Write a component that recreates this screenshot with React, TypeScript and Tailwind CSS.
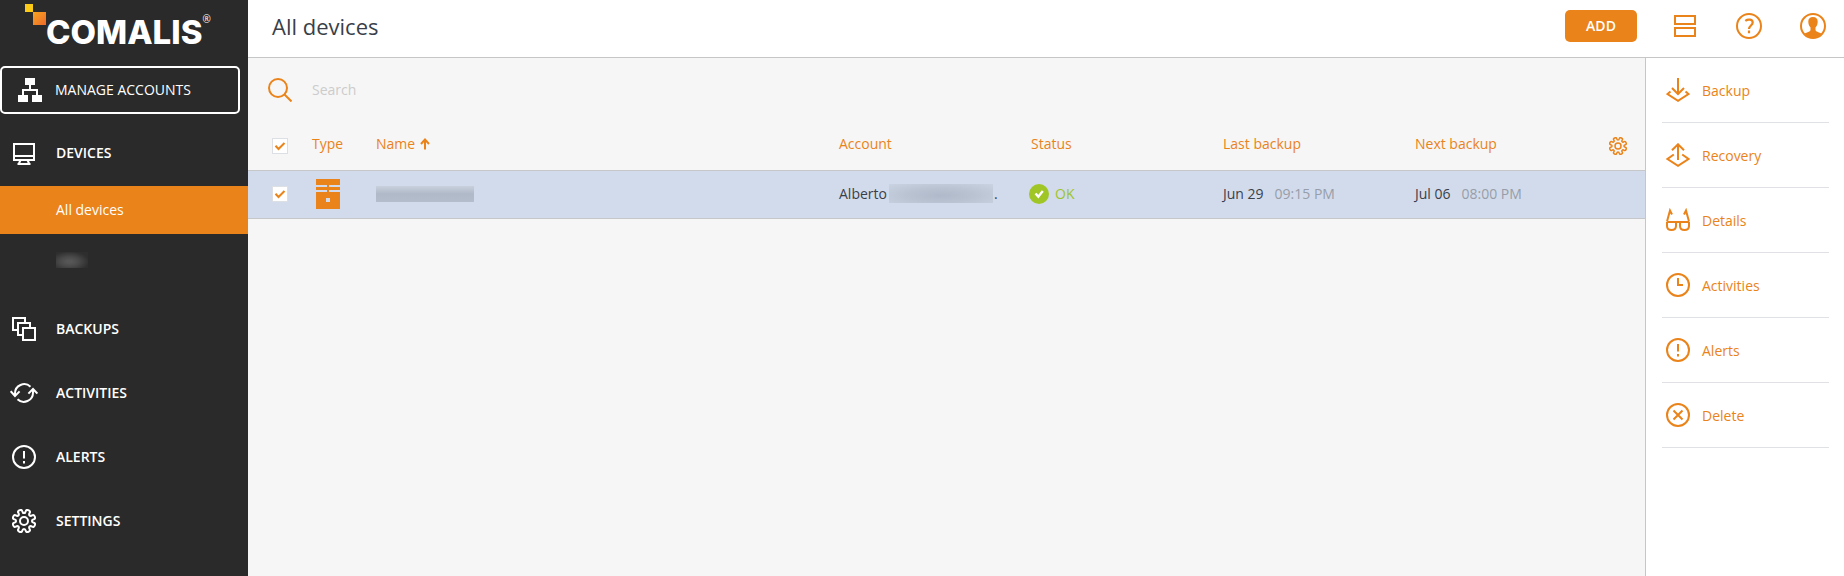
import React, { useState } from "react";

// Eight rounded teeth: each corner is the control point of a curve between edge midpoints.
const GEAR_PATH = (() => {
  const corners: [number, number][] = [];
  for (let i = 0; i < 8; i++) {
    const mid = 22.5 + i * 45;
    for (const [r, deg] of [
      [8, mid - 13],
      [11.9, mid - 12],
      [11.9, mid + 12],
      [8, mid + 13],
    ]) {
      const a = (deg * Math.PI) / 180;
      corners.push([12 + r * Math.cos(a), 12 + r * Math.sin(a)]);
    }
  }
  const between = (a: [number, number], b: [number, number]) =>
    `${((a[0] + b[0]) / 2).toFixed(2)} ${((a[1] + b[1]) / 2).toFixed(2)}`;
  const last = corners[corners.length - 1];
  let d = `M${between(last, corners[0])}`;
  corners.forEach((c, i) => {
    const next = corners[(i + 1) % corners.length];
    d += `Q${c[0].toFixed(2)} ${c[1].toFixed(2)} ${between(c, next)}`;
  });
  return `${d}Z`;
})();

type IconProps = { className?: string; children: React.ReactNode };

function Icon({ className = "size-6", children }: IconProps) {
  return (
    <svg
      viewBox="0 0 24 24"
      fill="none"
      stroke="currentColor"
      strokeWidth="2"
      aria-hidden="true"
      className={`block shrink-0 ${className}`}
    >
      {children}
    </svg>
  );
}

const GearIcon = ({ className }: { className?: string }) => (
  <Icon className={className}>
    <path d={GEAR_PATH} strokeLinejoin="round" />
    <circle cx="12" cy="12" r="4" />
  </Icon>
);

const AlertIcon = () => (
  <Icon>
    <circle cx="12" cy="12" r="11" />
    <path d="M12 6v7.5M12 16v2.4" />
  </Icon>
);

const OrgIcon = () => (
  <Icon>
    <path d="M7 0h10v7H7zM0 17h10v7H0zM14 17h10v7H14z" fill="currentColor" stroke="none" />
    <path d="M12 7v5M5 17v-5h14v5" />
  </Icon>
);

const MonitorIcon = () => (
  <Icon>
    <path d="M2 3h20v16H2zM2 15h20M8.5 19L7 22.5M15.500 19l1.500 3.500M5.500 23h13" />
  </Icon>
);

const StackIcon = () => (
  <Icon>
    <path d="M5 13H1V1h12v4" />
    <path d="M10 18H6V6h12v4" />
    <path d="M11 11h12v12H11z" />
  </Icon>
);

const SyncIcon = () => (
  <svg viewBox="0 0 28 24" fill="none" stroke="currentColor" strokeWidth="2" aria-hidden="true" className="-mx-0.5 block h-6 w-7 shrink-0">
    <path d="M20.500 5.700A9.200 9.200 0 0 0 5 12.500v2.500M.7 10.200L5 15l4.600-4.600" />
    <path d="M7.500 18.300A9.200 9.200 0 0 0 23 11.500V8M18.400 12.600L23 8l4.400 4.600" />
  </svg>
);

function Logo() {
  return (
    <div className="flex h-[66px] items-start pl-[25px] pt-1 text-white">
      <svg viewBox="0 0 21 21" aria-hidden="true" className="block size-[21px] shrink-0">
        <defs>
          <linearGradient id="square" x1="0" y1="0" x2="1" y2="1">
            <stop offset="0" stopColor="#f6a51f" />
            <stop offset="1" stopColor="#ee6a2c" />
          </linearGradient>
        </defs>
        <rect width="8" height="8" fill="#fccb17" />
        <rect x="8" y="8" width="13" height="13" fill="url(#square)" />
      </svg>
      <span className="mt-2.5 font-['Inter',sans-serif] text-[33px] leading-9 font-extrabold">COMALIS</span>
      <span className="mt-[7px] text-[10px] leading-4">®</span>
    </div>
  );
}

const NAV = [
  { label: "BACKUPS", icon: <StackIcon /> },
  { label: "ACTIVITIES", icon: <SyncIcon /> },
  { label: "ALERTS", icon: <AlertIcon /> },
  { label: "SETTINGS", icon: <GearIcon /> },
];

function NavItem({ label, icon }: { label: string; icon: React.ReactNode }) {
  return (
    <a href="#" className="flex h-16 items-center gap-5 pl-3 font-semibold">
      {icon}
      {label}
    </a>
  );
}

function Sidebar() {
  return (
    <nav className="w-[248px] shrink-0 bg-[#2a2a2a] text-white">
      <Logo />
      <a href="#" className="mr-2 flex h-12 items-center gap-[13px] rounded-[5px] border-2 border-white pl-4">
        <OrgIcon />
        MANAGE ACCOUNTS
      </a>
      <div className="mt-[7px]">
        <NavItem label="DEVICES" icon={<MonitorIcon />} />
        <div className="pt-px pb-[15px]">
          <a href="#" className="flex h-12 items-center bg-[#ea8319] pl-14">
            All devices
          </a>
          <a href="#" aria-label="Device group" className="flex h-12 items-center pt-1 pl-14">
            <span className="h-4 w-8 bg-[radial-gradient(ellipse_at_42%_60%,#565656_10%,#4a4a4a_35%,#2e2e2e_75%)]" />
          </a>
        </div>
        {NAV.map((item) => (
          <NavItem key={item.label} {...item} />
        ))}
      </div>
    </nav>
  );
}

function Checkbox({ label, checked, onChange }: { label: string; checked: boolean; onChange: (v: boolean) => void }) {
  return (
    <label className="grid size-4 place-items-center">
      <input
        type="checkbox"
        aria-label={label}
        checked={checked}
        onChange={(e) => onChange(e.target.checked)}
        className="peer col-start-1 row-start-1 size-4 appearance-none border border-[#dcdfe3] bg-white"
      />
      <svg
        viewBox="0 0 16 16"
        aria-hidden="true"
        className="pointer-events-none invisible col-start-1 row-start-1 block size-4 fill-none stroke-[#ea8319] peer-checked:visible"
      >
        <path d="M3.500 7.800l3 3.200 6-6" strokeWidth="2" />
      </svg>
    </label>
  );
}

function DeviceTable() {
  const [selected, setSelected] = useState(true);
  const head = "h-[49px] border-b border-[#c6c7c9] p-0";
  const headText = "h-[49px] border-b border-[#c6c7c9] p-0 pb-1 font-normal";
  const cell = "h-12 border-b border-[#c6c7c9] p-0 pb-0.5";
  return (
    <table className="w-full table-fixed border-separate border-spacing-0 text-left">
      <colgroup>
        <col className="w-16" />
        <col className="w-16" />
        <col />
        <col className="w-48" />
        <col className="w-48" />
        <col className="w-48" />
        <col className="w-48" />
        <col className="w-[38px]" />
      </colgroup>
      <thead className="text-[#ea8319]">
        <tr>
          <th className={`${head} pl-6`}>
            <Checkbox label="Select all devices" checked={selected} onChange={setSelected} />
          </th>
          <th className={headText}>Type</th>
          <th className={headText}>
            <button type="button" className="flex items-center gap-[5px]">
              Name
              <svg viewBox="0 0 10 12" fill="none" stroke="currentColor" strokeWidth="2" aria-hidden="true" className="block h-3 w-2.5">
                <path d="M5 11.500V1.500M1 6l4-4.500L9 6" />
              </svg>
            </button>
          </th>
          <th className={headText}>Account</th>
          <th className={headText}>Status</th>
          <th className={headText}>Last backup</th>
          <th className={headText}>Next backup</th>
          <th className={head}>
            <button type="button" aria-label="Table settings" className="ml-0.5 block">
              <GearIcon className="size-[18px]" />
            </button>
          </th>
        </tr>
      </thead>
      <tbody className="bg-[#d2dbeb] text-[#3a3f4a]">
        <tr>
          <td className={`${cell} pl-6`}>
            <Checkbox label="Select device" checked={selected} onChange={setSelected} />
          </td>
          <td className={cell}>
            <svg viewBox="0 0 24 30" fill="#ea8319" aria-hidden="true" className="ml-1 block h-[30px] w-6">
              <path d="M0 0h24v6H13v2h11v3H13v2h11v17H0V13h11v-2H0V8h11V6H0zM10 19v4h4v-4z" fillRule="evenodd" />
            </svg>
          </td>
          <td className={cell}>
            <div className="h-4 w-[98px] bg-linear-to-b from-[#c8d0de] via-[#b0b9c7] to-[#b4bdcb]" />
          </td>
          <td className={cell}>
            <div className="flex items-center">
              Alberto
              <span className="mr-px ml-0.5 h-[19px] w-[104px] bg-[radial-gradient(ellipse_at_50%_60%,#b0b9c9_0%,#bac3d2_45%,#cad3e2_100%)]" />
              .
            </div>
          </td>
          <td className={cell}>
            <div className="-ml-0.5 flex items-center gap-1.5 text-[#9dc42a]">
              <svg viewBox="0 0 20 20" aria-hidden="true" className="block size-5">
                <circle cx="10" cy="10" r="10" fill="#a0c626" />
                <path d="M6.500 9.500l2.800 3.200L13.800 7" fill="none" stroke="#fff" strokeWidth="2.400" />
              </svg>
              OK
            </div>
          </td>
          <td className={cell}>
            Jun 29<span className="ml-[11px] text-[#979da9]">09:15 PM</span>
          </td>
          <td className={cell}>
            Jul 06<span className="ml-[11px] text-[#979da9]">08:00 PM</span>
          </td>
          <td className={cell} />
        </tr>
      </tbody>
    </table>
  );
}

const ACTIONS = [
  {
    label: "Backup",
    icon: (
      <Icon>
        <path d="M12 0v15.500M6 10l6 6 6-6M4.500 13.400L1.500 16 12 22.800 22.500 16l-3-2.600" />
      </Icon>
    ),
  },
  {
    label: "Recovery",
    icon: (
      <Icon>
        <path d="M12 17V1.500M6 7.300l6-6 6 6M7.800 11.500L1.500 16 12 22.800 22.500 16l-6.300-4.500" />
      </Icon>
    ),
  },
  {
    label: "Details",
    icon: (
      <Icon>
        <path d="M1 14h22M1 13.500L4 2.500l2 4M23 13.500L20 2.500l-2 4" />
        <path d="M1 14v4c0 3 1.500 4 4.500 4s4.500-1 4.500-4v-4M14 14v4c0 3 1.500 4 4.500 4s4.500-1 4.500-4v-4" />
      </Icon>
    ),
  },
  {
    label: "Activities",
    icon: (
      <Icon>
        <circle cx="12" cy="12" r="11" />
        <path d="M12 5v7h5" />
      </Icon>
    ),
  },
  { label: "Alerts", icon: <AlertIcon /> },
  {
    label: "Delete",
    icon: (
      <Icon>
        <circle cx="12" cy="12" r="11" />
        <path d="M7.500 7.500l9 9M16.500 7.500l-9 9" />
      </Icon>
    ),
  },
];

function Header() {
  return (
    <header className="flex h-[58px] items-center border-b border-[#c4c6c7] bg-white pr-[18px] pl-6 text-[#ea8319]">
      <h1 className="mr-auto pb-1.5 text-[22px] leading-7 text-[#3a3f4a]">All devices</h1>
      <button type="button" className="mb-[5px] h-8 w-[72px] rounded-[5px] bg-[#ea8319] font-semibold text-white">
        ADD
      </button>
      <div className="mb-[5px] ml-[35px] flex items-center gap-[38px]">
        <button type="button" aria-label="Layout" className="grid size-[26px] place-items-center">
          <Icon>
            <path d="M2 2h20v8H2zM2 14h20v8H2z" />
          </Icon>
        </button>
        <button type="button" aria-label="Help" className="grid size-[26px] place-items-center">
          <svg viewBox="0 0 26 26" fill="none" stroke="currentColor" strokeWidth="2" aria-hidden="true" className="block size-[26px]">
            <circle cx="13" cy="13" r="12" />
            <path d="M9.300 7.800c3-2.200 7.400-1.400 7.400 1.700 0 2.900-3.700 3.100-3.700 6.500M13 17.600v2.600" strokeWidth="2.200" />
          </svg>
        </button>
        <button type="button" aria-label="Profile">
          <svg viewBox="0 0 26 26" aria-hidden="true" className="block size-[26px]">
            <circle cx="13" cy="13" r="12" fill="none" stroke="currentColor" strokeWidth="2" />
            <path
              d="M13 4c3 0 4.700 1.700 4.700 4.500 0 2.500-.8 4.700-2.200 6v2.800c.5 1.500 3.500 2 6 3.200A12 12 0 0 1 13 25a12 12 0 0 1-8.500-4.500c2.500-1.200 5.500-1.700 6-3.200v-2.800c-1.400-1.300-2.200-3.500-2.200-6C8.300 5.700 10 4 13 4z"
              fill="currentColor"
            />
          </svg>
        </button>
      </div>
    </header>
  );
}

export default function App() {
  return (
    <div className="flex min-h-screen bg-[#f6f6f6] font-['Open_Sans',sans-serif] text-sm">
      <Sidebar />
      <div className="flex min-w-0 flex-1 flex-col">
        <Header />
        <div className="flex flex-1">
          <main className="min-w-0 flex-1">
            <label className="flex h-16 items-center gap-5 pl-5 text-[#ea8319]">
              <Icon>
                <circle cx="10" cy="10" r="9" />
                <path d="M16.500 16.500l7 7" />
              </Icon>
              <input
                type="search"
                aria-label="Search"
                placeholder="Search"
                className="flex-1 bg-transparent text-[#3a3f4a] outline-none placeholder:text-[#cccccc]"
              />
            </label>
            <DeviceTable />
          </main>
          <aside className="w-[199px] shrink-0 border-l border-[#c4c6c7] bg-white pr-[15px] pl-4 text-[#ea8319]">
            {ACTIONS.map(({ label, icon }) => (
              <button
                key={label}
                type="button"
                className="flex h-[65px] w-full items-center gap-3 border-b border-[#dfe1e4] pl-1 text-left"
              >
                {icon}
                <span className="pt-0.5">{label}</span>
              </button>
            ))}
          </aside>
        </div>
      </div>
    </div>
  );
}
